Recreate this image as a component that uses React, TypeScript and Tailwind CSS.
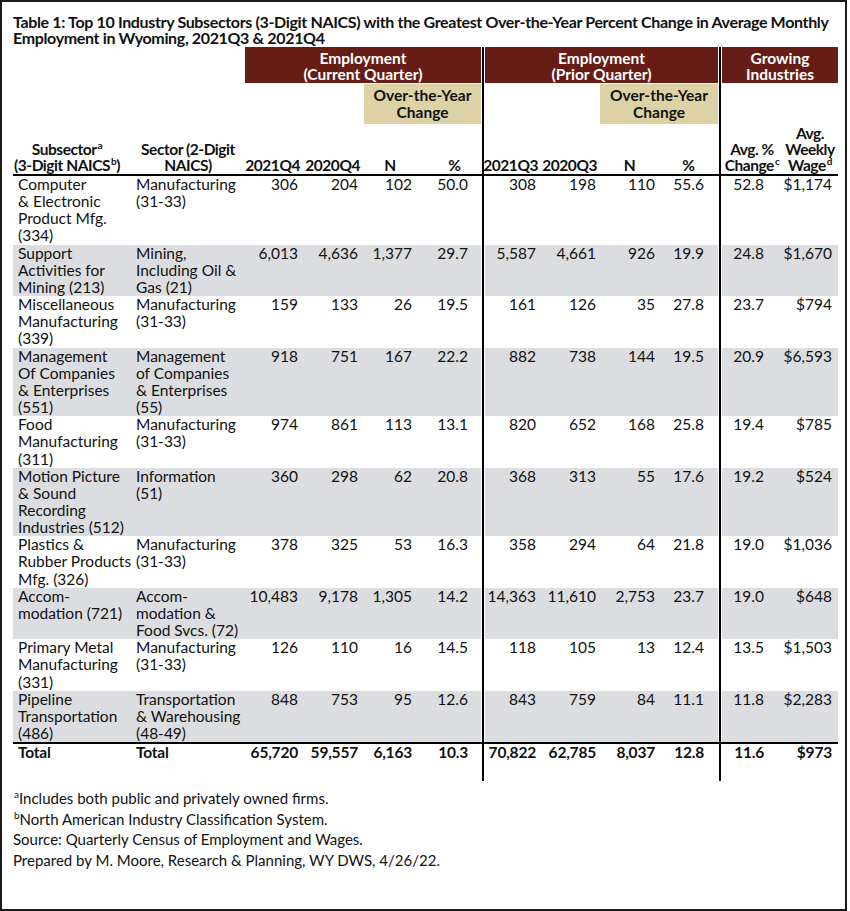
import React from 'react';

type Row = {
  sub: string[];
  sector: string[];
  values: string[];
};

const rows: Row[] = [
  { sub: ['Computer', '& Electronic', 'Product Mfg.', '(334)'], sector: ['Manufacturing', '(31-33)'], values: ['306', '204', '102', '50.0', '308', '198', '110', '55.6', '52.8', '$1,174'] },
  { sub: ['Support', 'Activities for', 'Mining (213)'], sector: ['Mining,', 'Including Oil &', 'Gas (21)'], values: ['6,013', '4,636', '1,377', '29.7', '5,587', '4,661', '926', '19.9', '24.8', '$1,670'] },
  { sub: ['Miscellaneous', 'Manufacturing', '(339)'], sector: ['Manufacturing', '(31-33)'], values: ['159', '133', '26', '19.5', '161', '126', '35', '27.8', '23.7', '$794'] },
  { sub: ['Management', 'Of Companies', '& Enterprises', '(551)'], sector: ['Management', 'of Companies', '& Enterprises', '(55)'], values: ['918', '751', '167', '22.2', '882', '738', '144', '19.5', '20.9', '$6,593'] },
  { sub: ['Food', 'Manufacturing', '(311)'], sector: ['Manufacturing', '(31-33)'], values: ['974', '861', '113', '13.1', '820', '652', '168', '25.8', '19.4', '$785'] },
  { sub: ['Motion Picture', '& Sound', 'Recording', 'Industries (512)'], sector: ['Information', '(51)'], values: ['360', '298', '62', '20.8', '368', '313', '55', '17.6', '19.2', '$524'] },
  { sub: ['Plastics &', 'Rubber Products', 'Mfg. (326)'], sector: ['Manufacturing', '(31-33)'], values: ['378', '325', '53', '16.3', '358', '294', '64', '21.8', '19.0', '$1,036'] },
  { sub: ['Accom-', 'modation (721)'], sector: ['Accom-', 'modation &', 'Food Svcs. (72)'], values: ['10,483', '9,178', '1,305', '14.2', '14,363', '11,610', '2,753', '23.7', '19.0', '$648'] },
  { sub: ['Primary Metal', 'Manufacturing', '(331)'], sector: ['Manufacturing', '(31-33)'], values: ['126', '110', '16', '14.5', '118', '105', '13', '12.4', '13.5', '$1,503'] },
  { sub: ['Pipeline', 'Transportation', '(486)'], sector: ['Transportation', '& Warehousing', '(48-49)'], values: ['848', '753', '95', '12.6', '843', '759', '84', '11.1', '11.8', '$2,283'] },
];

const totals = ['65,720', '59,557', '6,163', '10.3', '70,822', '62,785', '8,037', '12.8', '11.6', '$973'];

// right padding for each numeric column, so the figures line up like the source
const numPad = [
  'pr-[4px]', 'pr-[6px]', 'pr-[4px]', 'pr-[13px]',
  'pr-[4px]', 'pr-[4px]', 'pr-[4px]', 'pr-[14px]',
  'pr-[18px]', 'pr-[6px]',
];

const grid =
  'grid grid-cols-[118px_114px_57px_62px_52px_65px_4px_55px_60px_59px_59px_4px_60px_56px]';

const Divider = () => (
  <div className="flex justify-center">
    <div className="w-[2px] bg-black" />
  </div>
);

const Lines = ({ lines }: { lines: string[] }) => (
  <>
    {lines.map((l, i) => (
      <div key={i} className="whitespace-nowrap">
        {l}
      </div>
    ))}
  </>
);

const Sup = ({ children }: { children: React.ReactNode }) => (
  <sup className="text-[10px] relative -top-[6px] ml-[1px]">{children}</sup>
);

const DataRow = ({ row, gray, bold }: { row: Row; gray?: boolean; bold?: boolean }) => {
  const bg = gray ? 'bg-[#dcdde0]' : 'bg-white';
  const cells = row.values.map((v, i) => (
    <div key={i} className={`${bg} ${numPad[i]} text-right whitespace-nowrap`}>
      {v}
    </div>
  ));
  return (
    <div className={`${grid} leading-[17.15px] ${bold ? 'font-bold tracking-[-0.2px]' : ''}`}>
      <div className={`${bg} pl-[5px]`}>
        <Lines lines={row.sub} />
      </div>
      <div className={`${bg} pl-[5px]`}>
        <Lines lines={row.sector} />
      </div>
      {cells.slice(0, 4)}
      <Divider />
      {cells.slice(4, 8)}
      <Divider />
      {cells.slice(8)}
    </div>
  );
};

const App = () => {
  return (
    <div className="w-[847px] h-[911px] border-2 border-[#1a1a1a] bg-white text-[#111] font-['Lato',sans-serif] text-[15.5px] pl-[11px] pt-[12px]">
      <div className="font-bold text-[16px] leading-[16px] tracking-[-0.35px] whitespace-nowrap">
        Table 1: Top 10 Industry Subsectors (3-Digit NAICS) with the Greatest Over-the-Year Percent Change in Average Monthly
        <br />
        Employment in Wyoming, 2021Q3 &amp; 2021Q4
      </div>

      <div className="mt-[1px] w-[825px]">
        {/* group headings */}
        <div className={`${grid} font-bold text-white leading-[16px]`}>
          <div className="col-span-2" />
          <div className="col-span-4 h-[36px] bg-[#651d15] text-center pt-[3px]">
            Employment
            <br />
            (Current Quarter)
          </div>
          <Divider />
          <div className="col-span-4 h-[36px] bg-[#651d15] text-center pt-[3px]">
            Employment
            <br />
            (Prior Quarter)
          </div>
          <Divider />
          <div className="col-span-2 h-[36px] bg-[#651d15] text-center pt-[3px]">
            Growing
            <br />
            Industries
          </div>
        </div>

        <div className={`${grid} font-bold leading-[17px]`}>
          <div className="col-span-4" />
          <div className="col-span-2 h-[40px] mt-[1px] bg-[#ddd1a6] text-center pt-[3px]">
            Over-the-Year
            <br />
            Change
          </div>
          <Divider />
          <div className="col-span-2" />
          <div className="col-span-2 h-[40px] mt-[1px] bg-[#ddd1a6] text-center pt-[3px]">
            Over-the-Year
            <br />
            Change
          </div>
          <Divider />
          <div className="col-span-2" />
        </div>

        {/* column labels */}
        <div className={`${grid} font-bold leading-[16px] tracking-[-0.45px] h-[50px]`}>
          <div className="flex flex-col justify-end items-center pr-[10px] pb-[1px] whitespace-nowrap">
            <div>
              Subsector<Sup>a</Sup>
            </div>
            <div>
              (3-Digit NAICS<Sup>b</Sup>)
            </div>
          </div>
          <div className="flex flex-col justify-end items-center pb-[1px] whitespace-nowrap">
            <div>Sector (2-Digit</div>
            <div>NAICS)</div>
          </div>
          <div className="flex flex-col justify-end items-end pr-[2px] pb-[1px]">2021Q4</div>
          <div className="flex flex-col justify-end items-end pr-[4px] pb-[1px]">2020Q4</div>
          <div className="flex flex-col justify-end items-center pb-[1px]">N</div>
          <div className="flex flex-col justify-end items-center pl-[12px] pb-[1px]">%</div>
          <Divider />
          <div className="flex flex-col justify-end items-end pr-[2px] pb-[1px]">2021Q3</div>
          <div className="flex flex-col justify-end items-end pr-[3px] pb-[1px]">2020Q3</div>
          <div className="flex flex-col justify-end items-center pb-[1px]">N</div>
          <div className="flex flex-col justify-end items-center pb-[1px]">%</div>
          <Divider />
          <div className="flex flex-col justify-end items-center pb-[1px] whitespace-nowrap text-center">
            <div>Avg. %</div>
            <div>
              Change<Sup>c</Sup>
            </div>
          </div>
          <div className="flex flex-col justify-end items-center pb-[1px] whitespace-nowrap text-center">
            <div>Avg.</div>
            <div>Weekly</div>
            <div>
              Wage<Sup>d</Sup>
            </div>
          </div>
        </div>

        <div className="h-[2px] bg-black" />

        {rows.map((r, i) => (
          <DataRow key={i} row={r} gray={i % 2 === 1} />
        ))}

        <div className="h-[2px] bg-black" />

        <DataRow row={{ sub: ['Total'], sector: ['Total'], values: totals }} bold />

        <div className={`${grid} h-[20px]`}>
          <div className="col-span-6" />
          <Divider />
          <div className="col-span-4" />
          <Divider />
          <div className="col-span-2" />
        </div>
      </div>

      <div className="mt-[7px] text-[15px] leading-[20.5px] whitespace-nowrap">
        <div>
          <Sup>a</Sup>Includes both public and privately owned firms.
        </div>
        <div>
          <Sup>b</Sup>North American Industry Classification System.
        </div>
        <div>Source: Quarterly Census of Employment and Wages.</div>
        <div>Prepared by M. Moore, Research &amp; Planning, WY DWS, 4/26/22.</div>
      </div>
    </div>
  );
};

export default App;
